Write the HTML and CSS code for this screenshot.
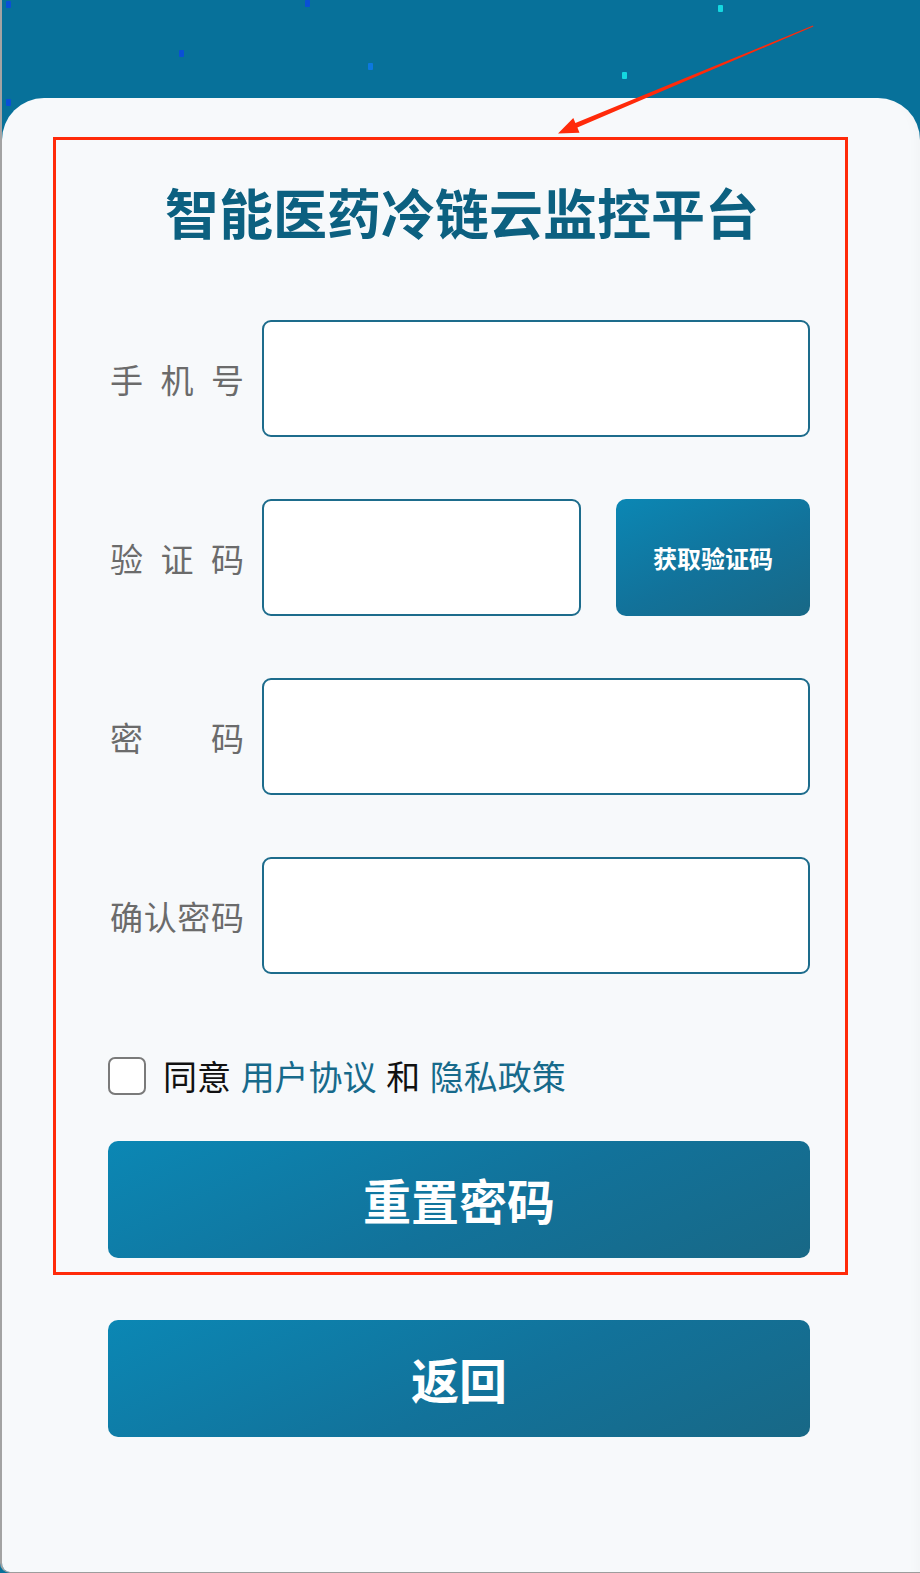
FILE: index.html
```html
<!DOCTYPE html>
<html lang="zh-CN">
<head>
<meta charset="utf-8">
<title>重置密码</title>
<link rel="stylesheet" href="styles.css">
</head>
<body>
<div class="screen">
  <div class="sky">
    <span class="dot blue" style="left:4px;top:1px"></span>
    <span class="dot blue" style="left:303px;top:0px"></span>
    <span class="dot cyan" style="left:716px;top:5px"></span>
    <span class="dot blue" style="left:177px;top:50px"></span>
    <span class="dot lblue" style="left:366px;top:63px"></span>
    <span class="dot cyan" style="left:620px;top:72px"></span>
    <span class="dot blue" style="left:4px;top:99px"></span>
  </div>
  <div class="card">
    <h1 class="title">智能医药冷链云监控平台</h1>
    <div class="form">
      <div class="row">
        <label class="label">手机号</label>
        <input class="field" type="text">
      </div>
      <div class="row">
        <label class="label">验证码</label>
        <input class="field short" type="text">
        <button class="btn code-btn" type="button">获取验证码</button>
      </div>
      <div class="row">
        <label class="label">密码</label>
        <input class="field" type="password">
      </div>
      <div class="row">
        <label class="label">确认密码</label>
        <input class="field" type="password">
      </div>
      <div class="agree">
        <span class="check"></span>
        <span class="agree-text">同意 <a class="link">用户协议</a> 和 <a class="link">隐私政策</a></span>
      </div>
      <button class="btn big-btn reset" type="button">重置密码</button>
      <button class="btn big-btn back" type="button">返回</button>
    </div>
  </div>
  <div class="mark-box"></div>
  <svg class="mark-arrow" width="920" height="160" viewBox="0 0 920 160">
    <polygon points="813,25.6 575.4,123.0 573.3,117.9 558,133.5 579.5,132.7 577.4,127.6 813.4,26.4" fill="#ff2a0a"/>
  </svg>
</div>
</body>
</html>
```
FILE: styles.css
```css
* { box-sizing: border-box; }
html, body {
  margin: 0;
  padding: 0;
  background: #07719a;
}
body {
  font-family: "Noto Sans CJK SC", "Noto Sans", sans-serif;
}
.screen {
  position: relative;
  width: 920px;
  height: 1573px;
  overflow: hidden;
  background: #07719a;
  border-left: 2px solid #a3a3a3;
  border-bottom: 1px solid #9d9d9d;
  border-bottom-left-radius: 10px;
}
.sky {
  position: relative;
  height: 98px;
}
.dot {
  position: absolute;
  width: 5px;
  height: 7px;
  border-radius: 1px;
}
.dot.blue { background: #0a4fd6; }
.dot.lblue { background: #0c78e0; }
.dot.cyan { background: #14d8e0; }
.card {
  background: #f7f9fb;
  border-radius: 42px 42px 0 0;
  height: 1475px;
  padding: 79px 108px 0 106px;
  box-shadow: inset -14px 0 14px -14px rgba(0,0,0,0.04);
}
.title {
  margin: 0;
  text-align: center;
  font-size: 54px;
  line-height: 70px;
  font-weight: 700;
  color: #0c6080;
  letter-spacing: 0;
  padding-left: 4px;
}
.form {
  margin-top: 73px;
  width: 702px;
}
.row {
  display: flex;
  align-items: center;
  height: 117px;
  margin-bottom: 62px;
}
.label {
  width: 136px;
  flex: none;
  margin-right: 18px;
  font-size: 33px;
  line-height: 40px;
  color: #6b6b6b;
  white-space: nowrap;
  text-align: justify;
  text-align-last: justify;
  padding-left: 2px;
}
.field {
  flex: 1;
  height: 117px;
  border: 2px solid #1d6c8c;
  border-radius: 9px;
  background: #fff;
  outline: none;
  font-size: 30px;
  padding: 0 16px;
}
.field.short {
  flex: none;
  width: 319px;
}
.btn {
  border: 0;
  color: #fff;
  font-family: "Noto Sans CJK SC", "Noto Sans", sans-serif;
  font-weight: 700;
  background: linear-gradient(155deg, #0b87b4 0%, #12729a 55%, #186886 100%);
  cursor: pointer;
}
.code-btn {
  margin-left: 35px;
  width: 194px;
  height: 117px;
  border-radius: 10px;
  font-size: 24px;
  padding: 0;
}
.agree {
  display: flex;
  align-items: center;
  height: 40px;
  margin-top: 82px;
}
.check {
  width: 38px;
  height: 38px;
  border: 2px solid #7a7a7a;
  border-radius: 7px;
  background: #fff;
  flex: none;
}
.agree-text {
  margin-left: 17px;
  font-size: 34px;
  line-height: 40px;
  word-spacing: 2px;
  color: #111;
  white-space: nowrap;
}
.link {
  color: #176a8b;
}
.big-btn {
  display: block;
  width: 702px;
  height: 117px;
  border-radius: 10px;
  font-size: 48px;
  line-height: 117px;
  padding: 0;
}
.reset { margin-top: 45px; }
.back { margin-top: 62px; }
.mark-box {
  position: absolute;
  left: 51px;
  top: 137px;
  width: 795px;
  height: 1138px;
  border: 3px solid #ff2a0a;
  pointer-events: none;
}
.mark-arrow {
  position: absolute;
  left: -2px;
  top: 0;
  pointer-events: none;
}
```
